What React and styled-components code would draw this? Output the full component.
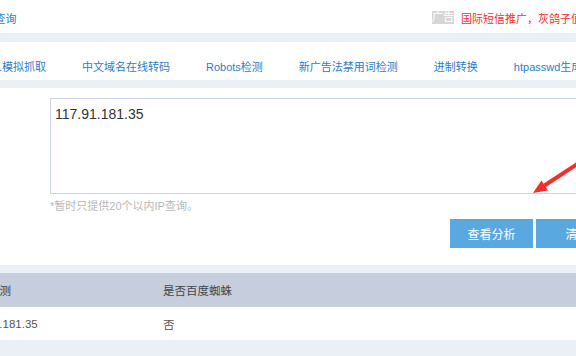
import React from "react";
import styled, { createGlobalStyle } from "styled-components";

const colors = {
  page: "#ebf0f6",
  white: "#ffffff",
  link: "#2f7cc3",
  red: "#f22f2f",
  border: "#c9d4e6",
  hint: "#b8b8b8",
  button: "#5aa8e0",
  head: "#c6cedd",
  text: "#333333",
  cell: "#555555",
};

const GlobalStyle = createGlobalStyle`
  html, body {
    margin: 0;
    padding: 0;
    background: ${colors.page};
    overflow: hidden;
    font-family: "Liberation Sans", "Noto Sans CJK SC", sans-serif;
  }
`;

const Page = styled.div`
  position: relative;
  width: 576px;
  height: 356px;
  overflow: hidden;
`;

const Card = styled.div`
  background: ${colors.white};
  overflow: hidden;
  margin-bottom: ${(p) => p.$gap || 0}px;
`;

const TopBar = styled.div`
  height: 33px;
  display: flex;
  align-items: center;
  padding-top: 2px;
  box-sizing: border-box;
  font-size: 11px;
  white-space: nowrap;
`;

const Title = styled.a`
  color: ${colors.link};
  margin-left: -16px;
`;

const Ad = styled.div`
  margin-left: auto;
  flex-shrink: 0;
  width: 144px;
  display: flex;
  align-items: center;
  gap: 7px;
`;

const AdTag = styled.span`
  background: #d6d6d6;
  color: #fff;
  font-size: 11px;
  line-height: 13px;
  padding: 0;
`;

const AdText = styled.span`
  color: ${colors.red};
`;

const Nav = styled.nav`
  display: flex;
  margin-left: -49px;
  padding: 17px 0 4px;
  white-space: nowrap;
`;

const NavLink = styled.a`
  color: ${colors.link};
  font-size: 11px;
  line-height: 17px;
  padding: 0 18px;
  flex-shrink: 0;
`;

const Form = styled.div`
  margin-left: 50px;
  width: 569px;
  padding: 10px 0 17px;
`;

const Input = styled.textarea`
  display: block;
  width: 100%;
  height: 96px;
  box-sizing: border-box;
  border: 1px solid ${colors.border};
  padding: 5px 4px;
  resize: none;
  outline: none;
  font-family: inherit;
  font-size: 14px;
  line-height: 20px;
  color: ${colors.text};
`;

const Hint = styled.p`
  margin: 5px 0 0;
  font-size: 11px;
  line-height: 15px;
  color: ${colors.hint};
`;

const Actions = styled.div`
  display: flex;
  justify-content: flex-end;
  gap: 3px;
  margin-top: 5px;
`;

const Button = styled.button`
  width: 83px;
  height: 29px;
  border: none;
  background: ${colors.button};
  color: #fff;
  font-family: inherit;
  font-size: 12px;
  cursor: pointer;
`;

const Table = styled.table`
  border-collapse: collapse;
  table-layout: fixed;
  margin-left: -45px;
  width: 700px;
  font-size: 11.5px;
`;

const TH = styled.th`
  background: ${colors.head};
  color: #444;
  font-weight: normal;
  text-align: left;
  height: 34px;
  padding: 0 10px;
  width: ${(p) => p.$width || "auto"};
`;

const TD = styled.td`
  color: ${colors.cell};
  height: 33px;
  padding: 0 10px;
  white-space: nowrap;
`;

const Arrow = styled.svg`
  position: absolute;
  left: 0;
  top: 0;
  pointer-events: none;
`;

const navItems = [
  "机器人模拟抓取",
  "中文域名在线转码",
  "Robots检测",
  "新广告法禁用词检测",
  "进制转换",
  "htpasswd生成器",
];

const App = () => (
  <Page>
    <GlobalStyle />
    <Card $gap={9}>
      <TopBar>
        <Title>IP查询</Title>
        <Ad>
          <AdTag>广告</AdTag>
          <AdText>国际短信推广，灰鸽子值得信赖</AdText>
        </Ad>
      </TopBar>
    </Card>
    <Card $gap={8}>
      <Nav>
        {navItems.map((item) => (
          <NavLink key={item}>{item}</NavLink>
        ))}
      </Nav>
    </Card>
    <Card $gap={8}>
      <Form>
        <Input defaultValue="117.91.181.35" />
        <Hint>*暂时只提供20个以内IP查询。</Hint>
        <Actions>
          <Button>查看分析</Button>
          <Button>清空</Button>
        </Actions>
      </Form>
    </Card>
    <Card>
      <Table>
        <thead>
          <tr>
            <TH $width="178px">地址检测</TH>
            <TH>是否百度蜘蛛</TH>
          </tr>
        </thead>
        <tbody>
          <tr>
            <TD>117.91.181.35</TD>
            <TD>否</TD>
          </tr>
        </tbody>
      </Table>
    </Card>
    <Arrow width="576" height="356" viewBox="0 0 576 356">
      <line x1="544.5" y1="185.5" x2="600" y2="149" stroke="#f2302a" strokeWidth="4" />
      <polygon points="533,193 541.4,180.4 548,190.4" fill="#f2302a" />
    </Arrow>
  </Page>
);

export default App;
